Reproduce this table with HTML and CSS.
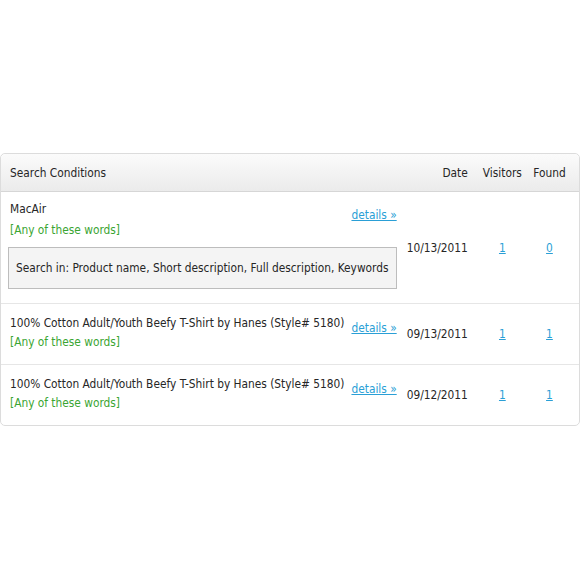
FILE: index.html
```html
<!DOCTYPE html>
<html>
<head>
<meta charset="utf-8">
<link rel="stylesheet" href="styles.css">
</head>
<body>
<div class="page">
<table class="grid">
  <thead>
    <tr>
      <th class="c-cond">Search Conditions</th>
      <th class="c-date">Date</th>
      <th class="c-num">Visitors</th>
      <th class="c-num c-last">Found</th>
    </tr>
  </thead>
  <tbody>
    <tr class="row-first">
      <td class="c-cond">
        <a class="details" href="#">details »</a>
        <div class="title">MacAir</div>
        <div class="mode">[Any of these words]</div>
        <div class="where">Search in: Product name, Short description, Full description, Keywords</div>
      </td>
      <td class="c-date">10/13/2011</td>
      <td class="c-num"><a href="#">1</a></td>
      <td class="c-num c-last"><a href="#">0</a></td>
    </tr>
    <tr class="row">
      <td class="c-cond">
        <a class="details" href="#">details »</a>
        <div class="title">100% Cotton Adult/Youth Beefy T-Shirt by Hanes (Style# 5180)</div>
        <div class="mode">[Any of these words]</div>
      </td>
      <td class="c-date">09/13/2011</td>
      <td class="c-num"><a href="#">1</a></td>
      <td class="c-num c-last"><a href="#">1</a></td>
    </tr>
    <tr class="row">
      <td class="c-cond">
        <a class="details" href="#">details »</a>
        <div class="title">100% Cotton Adult/Youth Beefy T-Shirt by Hanes (Style# 5180)</div>
        <div class="mode">[Any of these words]</div>
      </td>
      <td class="c-date">09/12/2011</td>
      <td class="c-num"><a href="#">1</a></td>
      <td class="c-num c-last"><a href="#">1</a></td>
    </tr>
  </tbody>
</table>
</div>
</body>
</html>
```

FILE: styles.css
```css
html, body {
  margin: 0;
  padding: 0;
  background: #fff;
}
.page {
  padding-top: 153px;
}
.grid {
  width: 580px;
  border-collapse: separate;
  border-spacing: 0;
  border: 1px solid #dcdcdc;
  border-radius: 5px;
  font-family: "DejaVu Sans Condensed", "DejaVu Sans", sans-serif;
  font-size: 11.8px;
  color: #262626;
  table-layout: fixed;
}
.grid th,
.grid td {
  box-sizing: border-box;
  padding: 0;
}
.grid th {
  height: 38px;
  font-weight: normal;
  text-align: left;
  background: linear-gradient(#fbfbfb, #ebebeb);
  border-bottom: 1px solid #d6d6d6;
}
.grid th:first-child { border-top-left-radius: 5px; }
.grid th:last-child { border-top-right-radius: 5px; }
.grid td {
  border-top: 1px solid #e6e6e6;
  vertical-align: middle;
}
.grid tbody tr:first-child td { border-top: none; }

.grid .c-cond {
  width: 399px;
  padding-left: 9px;
  padding-right: 4px;
}
.grid .c-date {
  width: 75px;
  text-align: right;
  padding-right: 8px;
}
.grid .c-num {
  width: 53px;
  text-align: center;
}
.grid .c-last {
  width: 50px;
  padding-right: 9px;
}

.row-first td.c-cond {
  padding-top: 7px;
  padding-bottom: 14px;
}
.row td.c-cond {
  padding-top: 9px;
  padding-bottom: 13px;
}

a { color: #2a9fd6; }
.details {
  float: right;
  line-height: 20px;
  margin-top: 6px;
}
.row .details { margin-top: 5px; }
.title {
  line-height: 20px;
}
.mode {
  line-height: 22px;
  color: #3aa532;
}
.row .mode { line-height: 18px; }
.where {
  margin-top: 6px;
  margin-left: -2px;
  padding: 12px 4px 12px 7px;
  background: #f4f4f4;
  border: 1px solid #bdbdbd;
  line-height: 16px;
  white-space: nowrap;
}
```
